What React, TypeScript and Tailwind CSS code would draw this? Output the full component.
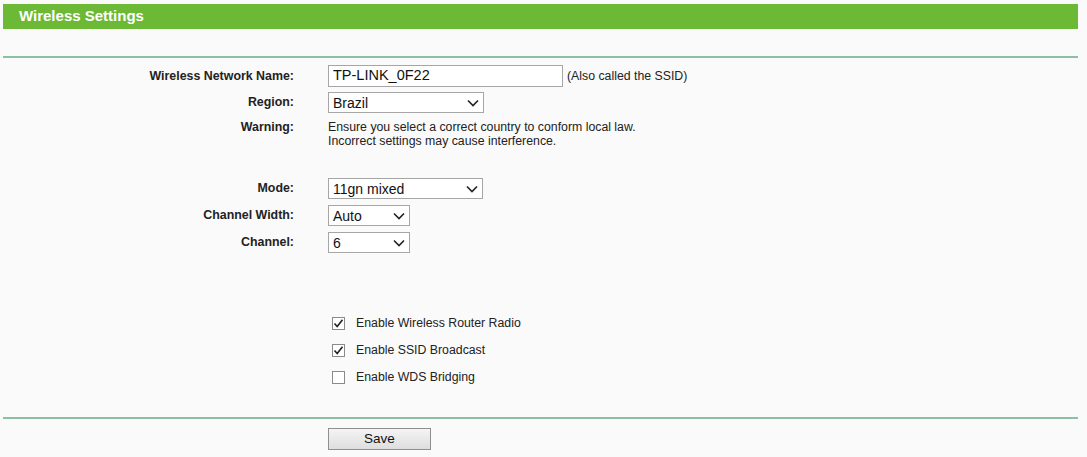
import React from 'react'

const LABEL_W = 'w-[291px]'

function Chevron() {
  return (
    <svg width="12" height="8" viewBox="0 0 12 8" className="shrink-0">
      <path d="M1 1.5 L6 6.5 L11 1.5" fill="none" stroke="#222" strokeWidth="1.6" />
    </svg>
  )
}

function Select({ value, width }: { value: string; width: string }) {
  return (
    <div className={`${width} h-[21px] border border-[#a6a6a6] bg-white flex items-center justify-between pl-[4px] pr-[4px] text-[14px] text-[#111]`}>
      <span className="leading-none">{value}</span>
      <Chevron />
    </div>
  )
}

function Row({ label, children, className = '' }: { label: string; children: React.ReactNode; className?: string }) {
  return (
    <div className={`flex items-center ${className}`}>
      <div className={`${LABEL_W} text-right font-bold text-[12.4px] text-[#222]`}>{label}</div>
      <div className="ml-[34px] flex items-center">{children}</div>
    </div>
  )
}

function Check({ checked, label, className = '' }: { checked: boolean; label: string; className?: string }) {
  return (
    <div className={`flex items-center h-[13px] ml-[329px] ${className}`}>
      <div className="w-[13px] h-[13px] border border-[#8a8a8a] bg-white flex items-center justify-center">
        {checked && (
          <svg width="11" height="11" viewBox="0 0 11 11">
            <path d="M1.5 5.5 L4.2 8.5 L9.5 1.8" fill="none" stroke="#222" strokeWidth="1.6" />
          </svg>
        )}
      </div>
      <span className="ml-[11px] text-[12.3px] text-[#222]">{label}</span>
    </div>
  )
}

export default function App() {
  return (
    <div className="min-h-screen bg-[#fafafa] font-['Liberation_Sans',Arial,sans-serif] pt-[4px] pl-[3px] pr-[9px]">
      <div className="h-[25px] bg-[#6bb934] flex items-center pl-[16px]">
        <span className="text-white font-bold text-[15px]">Wireless Settings</span>
      </div>

      <div className="mt-[27px] h-[2px] bg-[#8cc0a2]" />

      <Row label="Wireless Network Name:" className="mt-[7px] h-[22px]">
        <div className="w-[235px] h-[22px] border border-[#a6a6a6] bg-white flex items-center pl-[4px] text-[14.5px] text-[#111]">
          TP-LINK_0F22
        </div>
        <span className="ml-[4px] text-[12.3px] text-[#222]">(Also called the SSID)</span>
      </Row>

      <Row label="Region:" className="mt-[5px] h-[21px]">
        <Select value="Brazil" width="w-[156px]" />
      </Row>

      <div className="flex mt-[7px]">
        <div className={`${LABEL_W} text-right font-bold text-[12.4px] leading-[14px] text-[#222]`}>Warning:</div>
        <div className="ml-[34px] text-[12.3px] leading-[14px] text-[#222]">
          <div>Ensure you select a correct country to conform local law.</div>
          <div>Incorrect settings may cause interference.</div>
        </div>
      </div>

      <Row label="Mode:" className="mt-[30px] h-[21px]">
        <Select value="11gn mixed" width="w-[155px]" />
      </Row>
      <Row label="Channel Width:" className="mt-[6px] h-[21px]">
        <Select value="Auto" width="w-[82px]" />
      </Row>
      <Row label="Channel:" className="mt-[6px] h-[21px]">
        <Select value="6" width="w-[82px]" />
      </Row>

      <Check checked label="Enable Wireless Router Radio" className="mt-[64px]" />
      <Check checked label="Enable SSID Broadcast" className="mt-[14px]" />
      <Check checked={false} label="Enable WDS Bridging" className="mt-[14px]" />

      <div className="mt-[33px] h-[2px] bg-[#8cc0a2]" />

      <div className="mt-[7px] ml-[325px]">
        <button className="w-[103px] h-[22px] border border-[#8f8f8f] bg-gradient-to-b from-[#f4f4f4] to-[#dedede] text-[13.5px] text-[#111]">
          Save
        </button>
      </div>
    </div>
  )
}
